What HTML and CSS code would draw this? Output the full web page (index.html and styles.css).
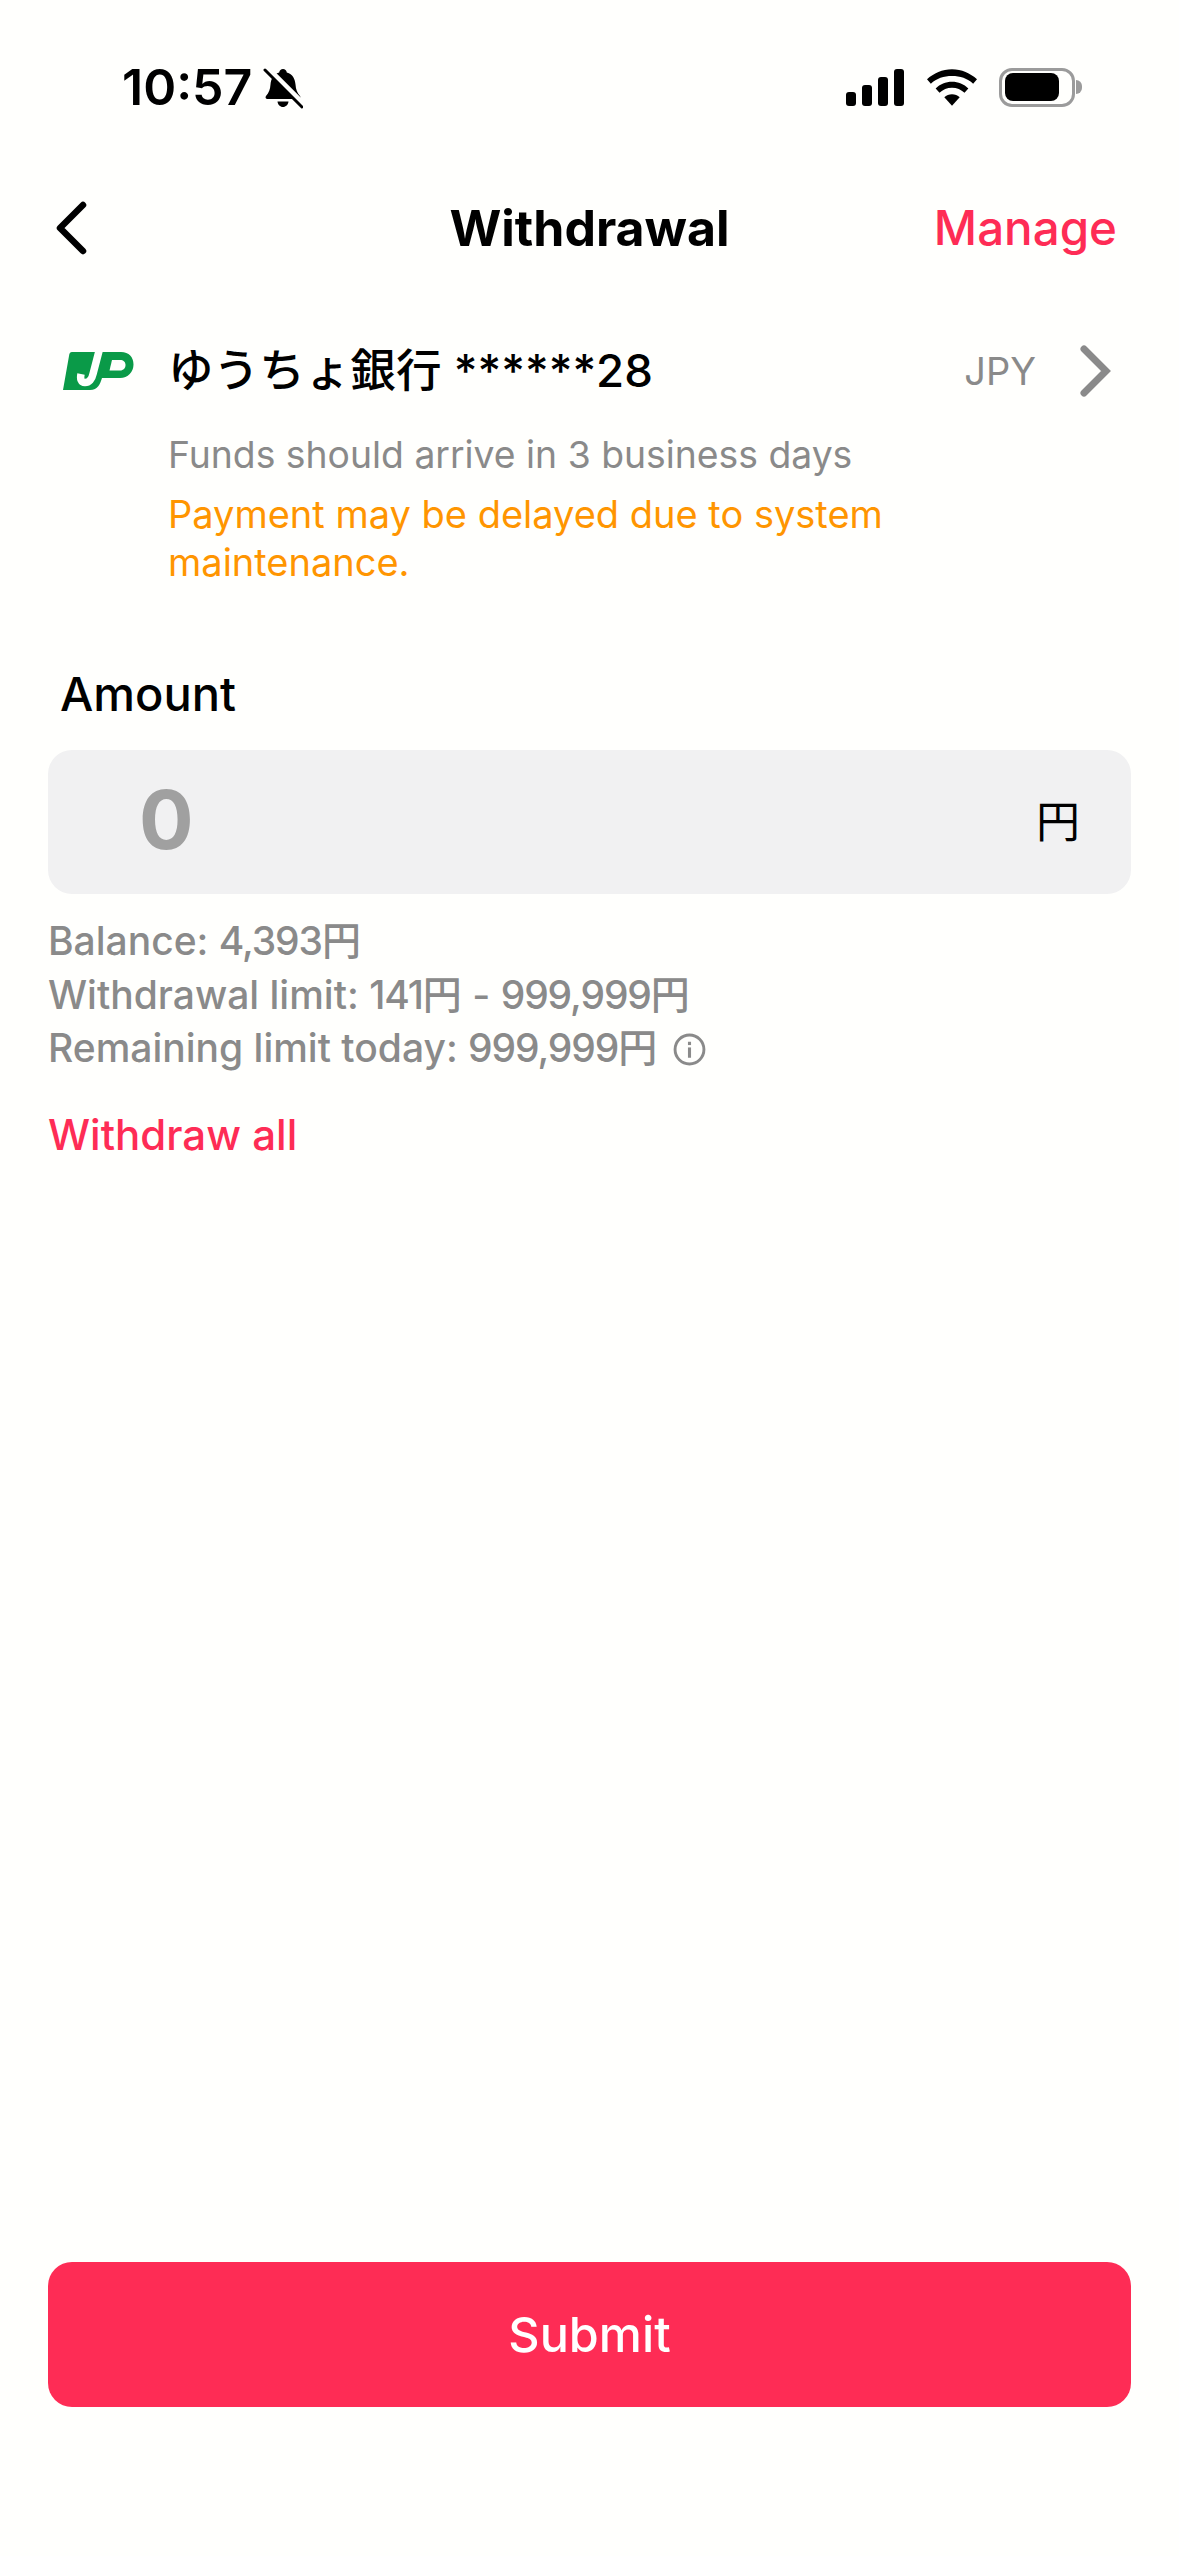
FILE: index.html
```html
<!DOCTYPE html>
<html lang="en">
<head>
<meta charset="utf-8">
<title>Withdrawal</title>
<link rel="stylesheet" href="styles.css">
</head>
<body>
<div class="page">
  <header class="status">
    <div class="status-left">
      <span class="time">10:57</span>
      <svg class="bell" viewBox="0 0 40 42" width="40" height="42"><path fill="#000" d="M20 2c2 0 3.500 1.500 3.800 3.500 6 1.500 8.200 6.500 8.700 12 .4 5 1.500 8 4.500 11.500 1 1.300.3 3-1.500 3H4.500C2.700 32 2 30.300 3 29c3-3.500 4.100-6.500 4.500-11.500.5-5.500 2.700-10.500 8.700-12C16.500 3.500 18 2 20 2zM14.500 34.500h11c-.4 3.200-2.600 5.500-5.500 5.500s-5.100-2.300-5.500-5.500z"/><path stroke="#fffffd" stroke-width="6" d="M3 0l38 38"/><path stroke="#000" stroke-width="3" stroke-linecap="round" d="M2 3l37 37"/></svg>
    </div>
    <div class="status-right">
      <svg class="signal" viewBox="0 0 58 37" width="58" height="37"><rect x="0" y="23" width="10" height="14" rx="3"/><rect x="16" y="16" width="10" height="21" rx="3"/><rect x="32" y="8" width="10" height="29" rx="3"/><rect x="48" y="0" width="10" height="37" rx="3"/></svg>
      <svg class="wifi" viewBox="0 0 52 38" width="50" height="37"><path d="M26 0c10 0 19 4 26 10.500l-4 4.500C42 9.500 34.500 7 26 7S10 9.500 4 15L0 10.500C7 4 16 0 26 0z"/><path d="M26 13c6.500 0 12.500 2.500 17 7l-4 4.500c-3.500-3.300-8-5.300-13-5.300s-9.500 2-13 5.300L9 20c4.500-4.500 10.500-7 17-7z"/><path d="M26 26c3 0 6 1.200 8 3.200L26 38l-8-8.800c2-2 5-3.200 8-3.200z"/></svg>
      <div class="battery"><div class="battery-fill"></div><div class="battery-cap"></div></div>
    </div>
  </header>

  <nav class="nav">
    <svg class="back" viewBox="0 0 34 54" width="34" height="54"><path d="M27 4L4 27l23 23" fill="none" stroke="#000" stroke-width="6.500" stroke-linecap="round" stroke-linejoin="round"/></svg>
    <h1 class="title">Withdrawal</h1>
    <span class="manage">Manage</span>
  </nav>

  <section class="bank">
    <div class="bank-row">
      <svg class="logo" viewBox="0 0 72 40" width="72" height="40"><path fill="#0a9a48" d="M10 1H59C67 1 71.500 6 71.500 13.500 71.500 21 66 27 58 27H40C38 33 36 39 28 39H1L7 5C7.500 2 8 1 10 1Z"/><path fill="#fffffd" d="M50 9H58C61.500 9 63.500 11 63.500 14 63.500 17 61.500 19.500 58 19.500H47.500Z"/><path fill="none" stroke="#fffffd" stroke-width="7.500" d="M37 0L31 23C30 28 27 31.500 23 31.500 19 31.500 18 28 19 23"/></svg>
      <span class="bank-name">ゆうちょ銀行 ******28</span>
      <span class="currency">JPY</span>
      <svg class="chevron" viewBox="0 0 32 52" width="32" height="52"><path d="M5 4l22 22L5 48" fill="none" stroke="#8a8a8a" stroke-width="7" stroke-linecap="round" stroke-linejoin="miter"/></svg>
    </div>
    <p class="arrive">Funds should arrive in 3 business days</p>
    <p class="warn">Payment may be delayed due to system maintenance.</p>
  </section>

  <main class="amount">
    <h2 class="amount-label">Amount</h2>
    <div class="field">
      <span class="placeholder">0</span>
      <span class="unit">円</span>
    </div>
    <ul class="info">
      <li>Balance: <span class="num">4,393</span>円</li>
      <li>Withdrawal limit: <span class="num">141</span>円 - <span class="num">999,999</span>円</li>
      <li class="info-row"><span>Remaining limit today: <span class="num">999,999</span>円</span>
        <svg class="info-icon" viewBox="0 0 32 32" width="33" height="33"><circle cx="16" cy="16" r="14" fill="none" stroke="#8a8a8a" stroke-width="2.800"/><rect x="14.500" y="14" width="3" height="10" fill="#8a8a8a"/><rect x="14.500" y="8.500" width="3" height="3.200" fill="#8a8a8a"/></svg>
      </li>
    </ul>
    <span class="withdraw-all">Withdraw all</span>
  </main>

  <button class="submit" type="button">Submit</button>
</div>
</body>
</html>
```
FILE: styles.css
```css
* { box-sizing: border-box; margin: 0; padding: 0; }
html, body { background: #fffffd; }
body { font-family: Inter, "Noto Sans CJK JP", sans-serif; color: #000; }
.page { width: 1179px; height: 2556px; display: flex; flex-direction: column; overflow: hidden; }

.status { height: 176px; padding: 60px 104px 0 122px; display: flex; justify-content: space-between; align-items: flex-start; flex: none; }
.status-left { display: flex; align-items: center; gap: 11px; height: 54px; }
.time { font-size: 50px; font-weight: 600; line-height: 54px; }
.bell { display: block; margin-top: 2px; }
.status-right { display: flex; align-items: center; gap: 22.500px; height: 54px; }
.signal { fill: #000; }
.wifi { fill: #000; }
.battery { position: relative; width: 76px; height: 39px; border: 3.500px solid #9b9b9b; border-radius: 13px; padding: 2.500px; }
.battery-fill { width: 54px; height: 100%; background: #000; border-radius: 8px; }
.battery-cap { position: absolute; right: -10px; top: 9px; width: 6px; height: 14px; background: #9b9b9b; border-radius: 0 6px 6px 0; }

.nav { height: 104px; padding: 0 62px 0 56px; display: grid; grid-template-columns: 1fr auto 1fr; align-items: center; flex: none; }
.title { font-size: 50px; font-weight: 700; line-height: 60px; text-align: center; margin-left: 6px; }
.manage { font-size: 47.500px; font-weight: 500; color: #fe2c55; text-align: right; line-height: 60px; }

.bank { padding: 61px 62px 0 62px; flex: none; height: 376px; }
.bank-row { display: flex; align-items: center; height: 60px; }
.logo { flex: none; margin-right: 34px; }
.bank-name { font-size: 45.600px; font-weight: 500; line-height: 60px; flex: 1; }
.currency { font-size: 38px; color: #8a8a8a; margin-right: 43px; }
.chevron { flex: none; margin-right: 6px; }
.arrive { font-size: 37.300px; line-height: 48px; color: #8a8a8a; margin: 30px 0 0 106px; }
.warn { font-size: 38px; line-height: 47.500px; color: #ff9500; margin: 12px 0 0 106px; width: 800px; }

.amount { flex: 1; padding: 0 48px; }
.amount-label { font-size: 47px; font-weight: 500; line-height: 60px; padding-left: 12px; margin-top: 8px; }
.field { height: 144px; margin-top: 26px; background: #f1f1f2; border-radius: 24px; display: flex; align-items: center; justify-content: space-between; padding: 0 51px 0 91px; }
.placeholder { font-size: 81px; font-weight: 700; color: #a0a0a0; margin-bottom: 4px; }
.unit { font-size: 44px; color: #000; margin-bottom: 6px; }
.info { list-style: none; margin-top: 20px; color: #8a8a8a; font-size: 39px; font-weight: 500; line-height: 53.700px; }
.num { letter-spacing: -1.100px; }
.info-row { display: flex; align-items: center; gap: 16px; }
.info-icon { margin-top: 2px; }
.withdraw-all { display: block; margin-top: 33px; font-size: 42px; font-weight: 500; line-height: 54px; color: #fe2c55; }

.submit { flex: none; width: 1083px; height: 145px; margin: 0 48px 149px; background: #fe2c55; color: #fff; border: 0; border-radius: 24px; font-family: Inter, sans-serif; font-size: 48.500px; font-weight: 500; }
```
